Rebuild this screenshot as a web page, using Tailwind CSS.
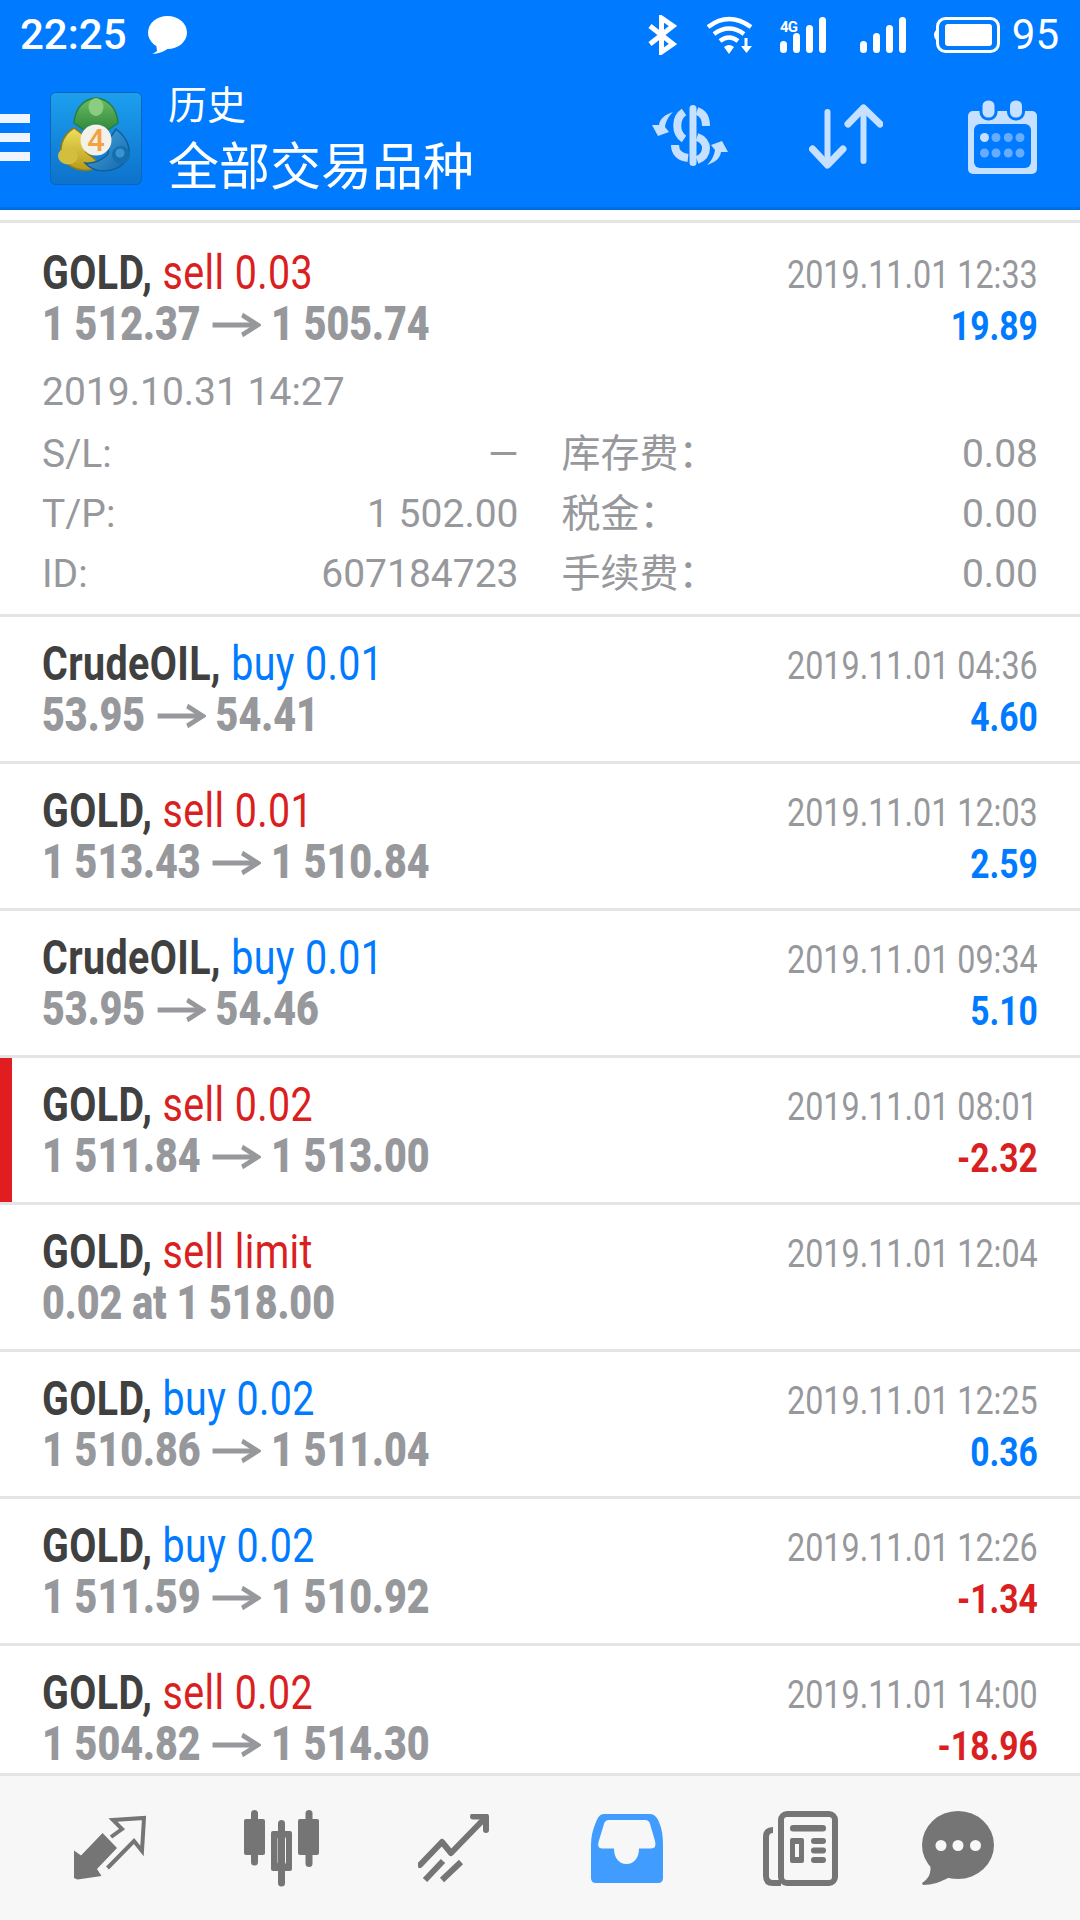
<!DOCTYPE html>
<html lang="zh-CN">
<head>
  <meta charset="UTF-8">
  <meta name="viewport" content="width=device-width, initial-scale=1.0">
  <title>历史</title>
  <script src="https://cdn.jsdelivr.net/npm/@tailwindcss/browser@4"></script>
</head>

<body class="bg-white font-['Roboto','Noto_Sans_CJK_SC',sans-serif]">
  <div class="w-[1080px] h-[1920px] flex flex-col overflow-hidden">
    <!-- Status bar + toolbar -->
    <header class="bg-[#007bff] text-white h-[210px] border-b-[3px] border-[#006fe6] shrink-0">
      <div class="h-[70px] flex items-center pl-[20px] pr-[21px]">
        <span class="text-[42px] font-medium leading-none">22:25</span>
        <svg class="ml-[21px] w-[39px] h-[38px]" viewBox="0 0 39 38" fill="#fff"><ellipse cx="19.5" cy="16.5" rx="19.5" ry="16.5"/><path d="M8 27 L9 35 Q5 38 4 38 Q14 38 22 31Z"/></svg>
        <svg class="ml-auto w-[29px] h-[40px]" viewBox="0 0 29 40" fill="none" stroke="#fff" stroke-width="5"><path d="M2 11 L25 29 L13.5 37 V3 L25 11 L2 29"/></svg>
        <svg class="ml-[30px] w-[46px] h-[39px]" viewBox="0 0 46 39" fill="none" stroke="#fff" stroke-width="4.5"><path d="M1 11 Q22 -5 44 11"/><path d="M7 18 Q22 7 37 18"/><path d="M13 25 Q22 18 31 25"/><path d="M17 31 L22 38 L27 31 Q22 27 17 31Z" fill="#fff" stroke="none"/><path d="M39 22 V31" stroke-width="3"/><path d="M34 30 H45 L39.5 37Z" fill="#fff" stroke="none"/></svg>
        <svg class="ml-[27px] w-[46px] h-[36px]" viewBox="0 0 46 36" fill="#fff">
          <rect x="0" y="24" width="7" height="12" rx="3.5"/><rect x="13" y="16" width="7" height="20" rx="3.5"/><rect x="26" y="8" width="7" height="28" rx="3.5"/><rect x="39" y="0" width="7" height="36" rx="3.5"/>
          <text x="0" y="15" font-size="15" font-weight="700" font-family="Roboto" textLength="18">4G</text>
        </svg>
        <svg class="ml-[34px] w-[46px] h-[36px]" viewBox="0 0 46 36" fill="#fff"><rect x="0" y="24" width="7" height="12" rx="3.5"/><rect x="13" y="16" width="7" height="20" rx="3.5"/><rect x="26" y="8" width="7" height="28" rx="3.5"/><rect x="39" y="0" width="7" height="36" rx="3.5"/></svg>
        <svg class="ml-[26px] w-[68px] h-[36px]" viewBox="0 0 68 36"><path d="M4 13 Q0 18 4 23Z" fill="#fff"/><rect x="5.5" y="1.5" width="61" height="33" rx="8" fill="none" stroke="#fff" stroke-width="3"/><rect x="13" y="7" width="47" height="22" rx="3" fill="#fff"/></svg>
        <span class="ml-[12px] text-[42px] leading-none">95</span>
      </div>
      <div class="h-[137px] flex items-center">
        <div class="w-[30px] flex flex-col gap-[10px] mt-[-3px]">
          <div class="h-[9px] bg-[#eef5ff]"></div>
          <div class="h-[9px] bg-[#eef5ff]"></div>
          <div class="h-[9px] bg-[#eef5ff]"></div>
        </div>
        <!-- MT4 logo -->
        <svg class="ml-[20px] w-[92px] h-[93px] shrink-0" viewBox="0 0 92 93">
          <defs>
            <linearGradient id="tile" x1="0" y1="0" x2="0" y2="1"><stop offset="0" stop-color="#1c9fee"/><stop offset="1" stop-color="#0d72cc"/></linearGradient>
            <linearGradient id="gold" x1="0" y1="0" x2="0" y2="1"><stop offset="0" stop-color="#efe05c"/><stop offset="1" stop-color="#b79a18"/></linearGradient>
            <linearGradient id="leaf" x1="0" y1="0" x2="0" y2="1"><stop offset="0" stop-color="#6dbb62"/><stop offset="1" stop-color="#2f8a3c"/></linearGradient>
            <linearGradient id="sea" x1="0" y1="0" x2="1" y2="1"><stop offset="0" stop-color="#4aa8dc"/><stop offset="1" stop-color="#1368ad"/></linearGradient>
          </defs>
          <rect x="0.5" y="0.5" width="91" height="92" rx="5" fill="url(#tile)" stroke="#0b64b4"/>
          <path d="M46 6 C33 7 25 17 24 31 L34 38 L46 32 L58 38 L68 31 C67 17 59 7 46 6Z" fill="url(#leaf)" stroke="#23803a" stroke-width="1.500"/>
          <ellipse cx="46" cy="15" rx="7.500" ry="9" fill="#8ccc80"/>
          <path d="M24 36 C11 44 8 58 14 68 C22 79 40 82 52 73 L36 60 L32 42Z" fill="url(#gold)" stroke="#8e7c14" stroke-width="1.500"/>
          <ellipse cx="18" cy="64" rx="10" ry="8.500" fill="#d2bf3e"/>
          <path d="M66 37 C80 48 83 62 74 71 C64 81 45 82 35 71 C45 72 52 68 58 62 L60 46Z" fill="url(#sea)" stroke="#0f5f9e" stroke-width="1.500"/>
          <circle cx="71" cy="63" r="9" fill="#156eb0"/><circle cx="70" cy="61" r="4.500" fill="#3b93cf"/>
          <circle cx="46" cy="48" r="15.500" fill="#f3f1ea"/>
          <text x="46" y="59" text-anchor="middle" font-family="Roboto" font-size="31" font-weight="500" fill="#f2a243">4</text>
        </svg>
        <div class="ml-[26px] flex flex-col mt-[2px]">
          <span class="text-[39px] leading-[50px]">历史</span>
          <span class="text-[51px] leading-[62px] mt-[6px] whitespace-nowrap">全部交易品种</span>
        </div>
        <svg class="ml-auto w-[78px] h-[61px] mt-[-6px]" viewBox="0 0 78 61" fill="none" stroke="#c6e0ff" stroke-width="8">
          <rect x="38.500" y="0" width="7" height="61" rx="3.500" fill="#c6e0ff" stroke="none"/>
          <path d="M46 6 C52 8 55 13 55 21"/>
          <path d="M33 7 C24 13 24 28 33 34"/>
          <path d="M46 32 C58 36 58 50 46 55"/>
          <path d="M24 40 C24 47 28 52 37 53"/>
          <path d="M22 7 C13 10 9 14 8 20 L1 20 L7 31 L18 27 L14 22 C15 16 17 12 22 7Z" fill="#c6e0ff" stroke="none"/>
          <path d="M56 54 C65 51 69 47 70 41 L77 41 L71 30 L60 34 L64 39 C63 45 61 49 56 54Z" fill="#c6e0ff" stroke="none" transform="translate(0 6)"/>
        </svg>
        <svg class="ml-[80px] w-[74px] h-[65px] mt-[-4px]" viewBox="0 0 74 65" fill="none" stroke="#c6e0ff" stroke-width="6" stroke-linecap="round" stroke-linejoin="round">
          <path d="M18.500 8 V60"/><path d="M3.500 45 L18.500 61 L34 45" stroke-width="7"/>
          <path d="M54.500 5 V57"/><path d="M39 20 L54.500 4 L71 20" stroke-width="7"/>
        </svg>
        <svg class="ml-[85px] mr-[43px] w-[69px] h-[74px] mt-[-4px]" viewBox="0 0 69 74">
          <rect x="0" y="11" width="69" height="63" rx="5" fill="#c6e0ff"/>
          <rect x="6" y="24" width="57" height="44" rx="6" fill="#007bff"/>
          <rect x="13" y="-1" width="15" height="20" rx="7" fill="#c6e0ff" stroke="#007bff" stroke-width="3"/>
          <rect x="40.500" y="-1" width="15" height="20" rx="7" fill="#c6e0ff" stroke="#007bff" stroke-width="3"/>
          <circle cx="16.500" cy="37.500" r="4.500" fill="#c6e0ff"/><circle cx="28" cy="37.500" r="4.500" fill="#66adff"/><circle cx="40.300" cy="37.500" r="4.500" fill="#66adff"/><circle cx="52" cy="37.500" r="4.500" fill="#66adff"/>
          <circle cx="16.500" cy="53" r="4.500" fill="#66adff"/><circle cx="28" cy="53" r="4.500" fill="#66adff"/><circle cx="40.300" cy="53" r="4.500" fill="#66adff"/><circle cx="52" cy="53" r="4.500" fill="#66adff"/>
        </svg>
      </div>
    </header>

    <!-- History list -->
    <main class="flex-1 overflow-hidden pt-[10px]">
      <div class="border-t-[3px] border-[#e4e4e4]">
        <!-- Expanded row -->
        <div class="h-[394px] border-b-[3px] border-[#e4e4e4] px-[42px]">
          <div class="flex justify-between h-[126px]">
            <div class="pt-[24px] w-[500px]">
              <div class="origin-left scale-x-[.82] tracking-[.5px] whitespace-nowrap w-[600px] text-[48px] leading-[51px] font-bold text-[#404040]">GOLD, <span class="font-normal text-[#d91f1f]">sell 0.03</span></div>
              <div class="origin-left scale-x-[.82] whitespace-nowrap w-[600px] text-[48px] leading-[51px] font-black text-[#97989c]">1 512.37 <svg class="inline-block w-[62px] h-[24px] align-[3.5px]" viewBox="0 0 62 24" fill="none" stroke="#97989c" stroke-width="5"><path d="M3 12 H58"/><path d="M39 2 L58 12 L39 22"/></svg> 1 505.74</div>
            </div>
            <div class="pt-[27px] text-right">
              <div class="origin-right scale-x-[.828] whitespace-nowrap text-[39px] leading-[51px] text-[#97989c]">2019.11.01 12:33</div>
              <div class="origin-right scale-x-[.84] whitespace-nowrap text-[40px] leading-[51px] font-bold text-[#007bff]">19.89</div>
            </div>
          </div>
          <div class="mt-[13px] h-[60px] leading-[60px] text-[39px] text-[#97989c]">2019.10.31 14:27</div>
          <div class="mt-[2px] grid grid-cols-2 gap-x-[43px] text-[39px] leading-[60px] text-[#97989c]">
            <div class="flex justify-between"><span>S/L:</span><span>—</span></div>
            <div class="flex justify-between"><span>库存费：</span><span>0.08</span></div>
            <div class="flex justify-between"><span>T/P:</span><span>1 502.00</span></div>
            <div class="flex justify-between"><span>税金：</span><span>0.00</span></div>
            <div class="flex justify-between"><span>ID:</span><span>607184723</span></div>
            <div class="flex justify-between"><span>手续费：</span><span>0.00</span></div>
          </div>
        </div>

        <div class="h-[147px] border-b-[3px] border-[#e4e4e4] px-[42px] flex justify-between">
          <div class="pt-[21px] w-[500px]">
            <div class="origin-left scale-x-[.82] tracking-[.5px] whitespace-nowrap w-[600px] text-[48px] leading-[51px] font-bold text-[#404040]">CrudeOIL, <span class="font-normal text-[#007bff]">buy 0.01</span></div>
            <div class="origin-left scale-x-[.82] whitespace-nowrap w-[600px] text-[48px] leading-[51px] font-black text-[#97989c]">53.95 <svg class="inline-block w-[62px] h-[24px] align-[3.5px]" viewBox="0 0 62 24" fill="none" stroke="#97989c" stroke-width="5"><path d="M3 12 H58"/><path d="M39 2 L58 12 L39 22"/></svg> 54.41</div>
          </div>
          <div class="pt-[24px] text-right">
            <div class="origin-right scale-x-[.828] whitespace-nowrap text-[39px] leading-[51px] text-[#97989c]">2019.11.01 04:36</div>
            <div class="origin-right scale-x-[.84] whitespace-nowrap text-[40px] leading-[51px] font-bold text-[#007bff]">4.60</div>
          </div>
        </div>

        <div class="h-[147px] border-b-[3px] border-[#e4e4e4] px-[42px] flex justify-between">
          <div class="pt-[21px] w-[500px]">
            <div class="origin-left scale-x-[.82] tracking-[.5px] whitespace-nowrap w-[600px] text-[48px] leading-[51px] font-bold text-[#404040]">GOLD, <span class="font-normal text-[#d91f1f]">sell 0.01</span></div>
            <div class="origin-left scale-x-[.82] whitespace-nowrap w-[600px] text-[48px] leading-[51px] font-black text-[#97989c]">1 513.43 <svg class="inline-block w-[62px] h-[24px] align-[3.5px]" viewBox="0 0 62 24" fill="none" stroke="#97989c" stroke-width="5"><path d="M3 12 H58"/><path d="M39 2 L58 12 L39 22"/></svg> 1 510.84</div>
          </div>
          <div class="pt-[24px] text-right">
            <div class="origin-right scale-x-[.828] whitespace-nowrap text-[39px] leading-[51px] text-[#97989c]">2019.11.01 12:03</div>
            <div class="origin-right scale-x-[.84] whitespace-nowrap text-[40px] leading-[51px] font-bold text-[#007bff]">2.59</div>
          </div>
        </div>

        <div class="h-[147px] border-b-[3px] border-[#e4e4e4] px-[42px] flex justify-between">
          <div class="pt-[21px] w-[500px]">
            <div class="origin-left scale-x-[.82] tracking-[.5px] whitespace-nowrap w-[600px] text-[48px] leading-[51px] font-bold text-[#404040]">CrudeOIL, <span class="font-normal text-[#007bff]">buy 0.01</span></div>
            <div class="origin-left scale-x-[.82] whitespace-nowrap w-[600px] text-[48px] leading-[51px] font-black text-[#97989c]">53.95 <svg class="inline-block w-[62px] h-[24px] align-[3.5px]" viewBox="0 0 62 24" fill="none" stroke="#97989c" stroke-width="5"><path d="M3 12 H58"/><path d="M39 2 L58 12 L39 22"/></svg> 54.46</div>
          </div>
          <div class="pt-[24px] text-right">
            <div class="origin-right scale-x-[.828] whitespace-nowrap text-[39px] leading-[51px] text-[#97989c]">2019.11.01 09:34</div>
            <div class="origin-right scale-x-[.84] whitespace-nowrap text-[40px] leading-[51px] font-bold text-[#007bff]">5.10</div>
          </div>
        </div>

        <!-- Selected row, red marker on the left edge -->
        <div class="relative h-[147px] border-b-[3px] border-[#e4e4e4] px-[42px] flex justify-between">
          <div class="absolute left-0 top-0 bottom-0 w-[12px] bg-[#e21d22]"></div>
          <div class="pt-[21px] w-[500px]">
            <div class="origin-left scale-x-[.82] tracking-[.5px] whitespace-nowrap w-[600px] text-[48px] leading-[51px] font-bold text-[#404040]">GOLD, <span class="font-normal text-[#d91f1f]">sell 0.02</span></div>
            <div class="origin-left scale-x-[.82] whitespace-nowrap w-[600px] text-[48px] leading-[51px] font-black text-[#97989c]">1 511.84 <svg class="inline-block w-[62px] h-[24px] align-[3.5px]" viewBox="0 0 62 24" fill="none" stroke="#97989c" stroke-width="5"><path d="M3 12 H58"/><path d="M39 2 L58 12 L39 22"/></svg> 1 513.00</div>
          </div>
          <div class="pt-[24px] text-right">
            <div class="origin-right scale-x-[.828] whitespace-nowrap text-[39px] leading-[51px] text-[#97989c]">2019.11.01 08:01</div>
            <div class="origin-right scale-x-[.84] whitespace-nowrap text-[40px] leading-[51px] font-bold text-[#d91f1f]">-2.32</div>
          </div>
        </div>

        <div class="h-[147px] border-b-[3px] border-[#e4e4e4] px-[42px] flex justify-between">
          <div class="pt-[21px] w-[500px]">
            <div class="origin-left scale-x-[.82] tracking-[.5px] whitespace-nowrap w-[600px] text-[48px] leading-[51px] font-bold text-[#404040]">GOLD, <span class="font-normal text-[#d91f1f]">sell limit</span></div>
            <div class="origin-left scale-x-[.82] whitespace-nowrap w-[600px] text-[48px] leading-[51px] font-black text-[#97989c]">0.02 at 1 518.00</div>
          </div>
          <div class="pt-[24px] text-right">
            <div class="origin-right scale-x-[.828] whitespace-nowrap text-[39px] leading-[51px] text-[#97989c]">2019.11.01 12:04</div>
          </div>
        </div>

        <div class="h-[147px] border-b-[3px] border-[#e4e4e4] px-[42px] flex justify-between">
          <div class="pt-[21px] w-[500px]">
            <div class="origin-left scale-x-[.82] tracking-[.5px] whitespace-nowrap w-[600px] text-[48px] leading-[51px] font-bold text-[#404040]">GOLD, <span class="font-normal text-[#007bff]">buy 0.02</span></div>
            <div class="origin-left scale-x-[.82] whitespace-nowrap w-[600px] text-[48px] leading-[51px] font-black text-[#97989c]">1 510.86 <svg class="inline-block w-[62px] h-[24px] align-[3.5px]" viewBox="0 0 62 24" fill="none" stroke="#97989c" stroke-width="5"><path d="M3 12 H58"/><path d="M39 2 L58 12 L39 22"/></svg> 1 511.04</div>
          </div>
          <div class="pt-[24px] text-right">
            <div class="origin-right scale-x-[.828] whitespace-nowrap text-[39px] leading-[51px] text-[#97989c]">2019.11.01 12:25</div>
            <div class="origin-right scale-x-[.84] whitespace-nowrap text-[40px] leading-[51px] font-bold text-[#007bff]">0.36</div>
          </div>
        </div>

        <div class="h-[147px] border-b-[3px] border-[#e4e4e4] px-[42px] flex justify-between">
          <div class="pt-[21px] w-[500px]">
            <div class="origin-left scale-x-[.82] tracking-[.5px] whitespace-nowrap w-[600px] text-[48px] leading-[51px] font-bold text-[#404040]">GOLD, <span class="font-normal text-[#007bff]">buy 0.02</span></div>
            <div class="origin-left scale-x-[.82] whitespace-nowrap w-[600px] text-[48px] leading-[51px] font-black text-[#97989c]">1 511.59 <svg class="inline-block w-[62px] h-[24px] align-[3.5px]" viewBox="0 0 62 24" fill="none" stroke="#97989c" stroke-width="5"><path d="M3 12 H58"/><path d="M39 2 L58 12 L39 22"/></svg> 1 510.92</div>
          </div>
          <div class="pt-[24px] text-right">
            <div class="origin-right scale-x-[.828] whitespace-nowrap text-[39px] leading-[51px] text-[#97989c]">2019.11.01 12:26</div>
            <div class="origin-right scale-x-[.84] whitespace-nowrap text-[40px] leading-[51px] font-bold text-[#d91f1f]">-1.34</div>
          </div>
        </div>

        <div class="h-[147px] border-b-[3px] border-[#e4e4e4] px-[42px] flex justify-between">
          <div class="pt-[21px] w-[500px]">
            <div class="origin-left scale-x-[.82] tracking-[.5px] whitespace-nowrap w-[600px] text-[48px] leading-[51px] font-bold text-[#404040]">GOLD, <span class="font-normal text-[#d91f1f]">sell 0.02</span></div>
            <div class="origin-left scale-x-[.82] whitespace-nowrap w-[600px] text-[48px] leading-[51px] font-black text-[#97989c]">1 504.82 <svg class="inline-block w-[62px] h-[24px] align-[3.5px]" viewBox="0 0 62 24" fill="none" stroke="#97989c" stroke-width="5"><path d="M3 12 H58"/><path d="M39 2 L58 12 L39 22"/></svg> 1 514.30</div>
          </div>
          <div class="pt-[24px] text-right">
            <div class="origin-right scale-x-[.828] whitespace-nowrap text-[39px] leading-[51px] text-[#97989c]">2019.11.01 14:00</div>
            <div class="origin-right scale-x-[.84] whitespace-nowrap text-[40px] leading-[51px] font-bold text-[#d91f1f]">-18.96</div>
          </div>
        </div>
      </div>
    </main>

    <!-- Bottom tabs -->
    <nav class="h-[147px] shrink-0 bg-[#f7f7f7] border-t-[3px] border-[#e4e4e4] flex items-center pl-[74px]">
      <svg class="w-[72px] h-[66px]" viewBox="0 0 72 66">
        <path d="M28.600 18 L43 33 L23 54 L27.500 61 L3.500 64.500 L0 63 L0 35.500 L7 40.500Z" fill="#757575"/>
        <path d="M37 22 L48 14 L39 5 L70 3 L68 36 L60 26 L33.500 53" fill="none" stroke="#757575" stroke-width="4"/>
      </svg>
      <svg class="ml-[98px] w-[75px] h-[77px]" viewBox="0 0 75 77" fill="#757575">
        <rect x="7" y="0" width="7" height="55.500" rx="3.500"/><rect x="0" y="9" width="21" height="36" rx="2"/>
        <rect x="34" y="10" width="7" height="66.500" rx="3.500"/><path fill-rule="evenodd" d="M29 21 H46 Q48 21 48 23 V59 Q48 61 46 61 H29 Q27 61 27 59 V23 Q27 21 29 21Z M35 27 Q33.500 27 33.500 29 V52 Q33.500 54 35 54 H40.500 Q42 54 42 52 V29 Q42 27 40.500 27Z"/>
        <rect x="61.500" y="0" width="7" height="57" rx="3.500"/><rect x="54" y="9" width="21" height="36" rx="2"/>
      </svg>
      <svg class="ml-[99px] w-[71px] h-[69px]" viewBox="0 0 71 69" fill="none" stroke="#757575" stroke-width="6" stroke-linecap="round" stroke-linejoin="round">
        <path d="M2 51 L24 28 L33 39 L67 4"/><path d="M55 2.500 H68 V16"/><path d="M7 66 L25 47" stroke-linecap="butt"/><path d="M24 66 L43 48" stroke-linecap="butt"/>
      </svg>
      <svg class="ml-[102px] w-[72px] h-[69px]" viewBox="0 0 72 69">
        <path d="M13 0 H59 C63 0 66 3 68 8 C71 15 72 22 72 31 V64 Q72 69 67 69 H5 Q0 69 0 64 V31 C0 22 2 15 5 8 C7 3 9 0 13 0Z" fill="#409dff"/>
        <path d="M18 6 H54 Q58 6 59 10 L64 27 Q66 34.500 60 34.500 H48 C48 44 43 50 35.500 50 C28 50 23 44 23 34.500 H11 Q6 34.500 7.500 28 L13 10 Q14 6 18 6Z" fill="#f7f7f7"/>
      </svg>
      <svg class="ml-[100px] w-[75px] h-[75px]" viewBox="0 0 75 75" fill="#757575">
        <rect x="18" y="3" width="54" height="69" rx="6" fill="none" stroke="#757575" stroke-width="6"/>
        <path d="M10 19 Q3 19 3 26 V65 Q3 72 10 72 H18" fill="none" stroke="#757575" stroke-width="6"/>
        <rect x="27" y="14" width="36" height="6.500" rx="3"/>
        <path fill-rule="evenodd" d="M29 27 H39 Q41 27 41 29 V50 Q41 52 39 52 H29 Q27 52 27 50 V29 Q27 27 29 27Z M32 33 V46 H36 V33Z"/>
        <rect x="48" y="27" width="15" height="6" rx="3"/><rect x="48" y="36.500" width="15" height="6" rx="3"/><rect x="48" y="46" width="15" height="6" rx="3"/>
      </svg>
      <svg class="ml-[84px] w-[72px] h-[75px]" viewBox="0 0 72 75" fill="#757575">
        <ellipse cx="36" cy="34" rx="36" ry="34"/>
        <path d="M8 52 C10 63 6 68 0 72 L1 74 C10 74 19 71 28 66Z"/>
        <circle cx="19" cy="34.500" r="5.500" fill="#f7f7f7"/><circle cx="36" cy="34.500" r="5.500" fill="#f7f7f7"/><circle cx="53.500" cy="34.500" r="5.500" fill="#f7f7f7"/>
      </svg>
    </nav>
  </div>
</body>
</html>
